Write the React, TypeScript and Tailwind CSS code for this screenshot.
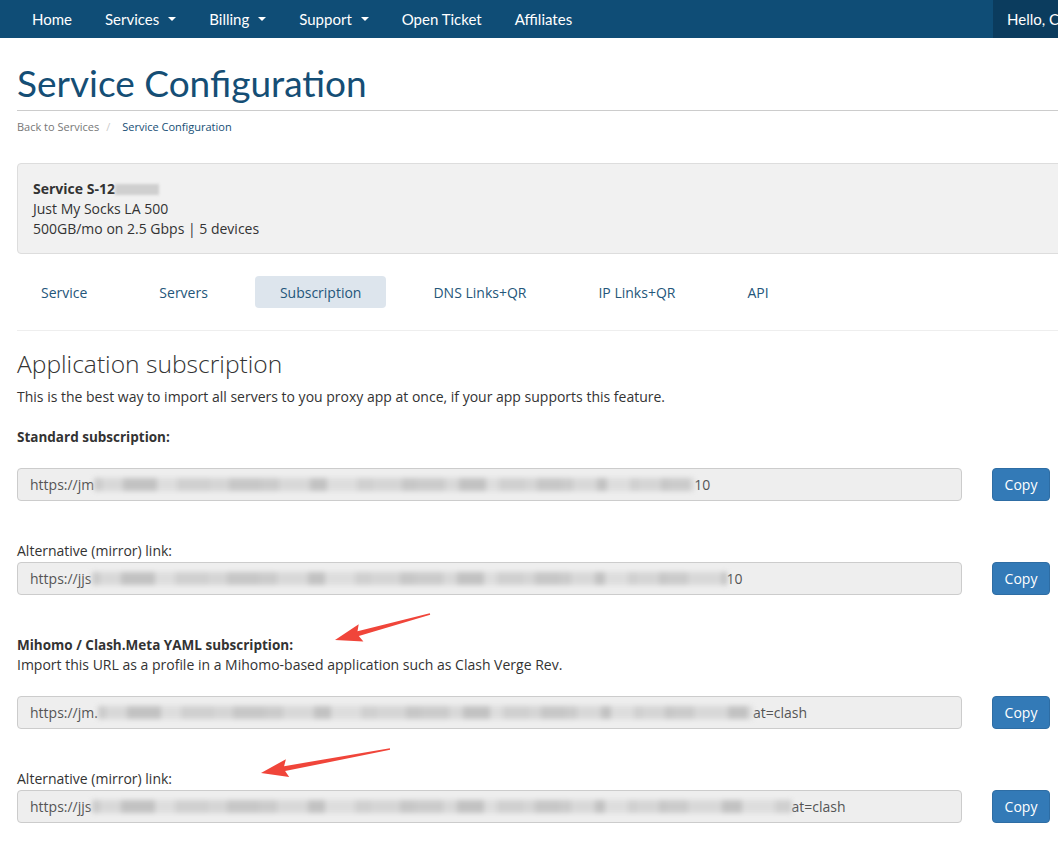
import React from 'react';

const navItems = [
  { label: 'Home', caret: false },
  { label: 'Services', caret: true },
  { label: 'Billing', caret: true },
  { label: 'Support', caret: true },
  { label: 'Open Ticket', caret: false },
  { label: 'Affiliates', caret: false },
];

const tabs = ['Service', 'Servers', 'Subscription', 'DNS Links+QR', 'IP Links+QR', 'API'];

// grey smudge used where the URL was blurred out
const Smudge: React.FC<{ width: number }> = ({ width }) => {
  const blocks = [];
  let x = 0;
  let i = 0;
  const shades = ['#cbcbcb', '#d8d8d8', '#c2c2c2', '#dddddd', '#d0d0d0', '#d5d5d5', '#c7c7c7'];
  while (x < width) {
    const w = Math.min(8 + ((i * 13) % 27), width - x);
    blocks.push(
      <span
        key={i}
        className="inline-block h-[13px]"
        style={{ width: w, background: shades[i % shades.length] }}
      />
    );
    x += w;
    i++;
  }
  return <span className="inline-flex items-center blur-[2.5px]">{blocks}</span>;
};

interface LinkRowProps {
  prefix: string;
  blur: number;
  suffix: string;
}

const LinkRow: React.FC<LinkRowProps> = ({ prefix, blur, suffix }) => (
  <div className="flex items-center gap-[30px]">
    <div className="w-[945px] h-[33px] flex items-center px-[12px] bg-[#eeeeee] border border-[#cccccc] rounded-[4px] text-[14px] text-[#555555] overflow-hidden whitespace-nowrap">
      <span>{prefix}</span>
      <Smudge width={blur} />
      <span>{suffix}</span>
    </div>
    <button className="w-[58px] h-[33px] bg-[#337ab7] border border-[#2e6da4] rounded-[4px] text-white text-[14px]">
      Copy
    </button>
  </div>
);

const Arrow: React.FC<{ tail: [number, number]; tip: [number, number] }> = ({ tail, tip }) => {
  const dx = tip[0] - tail[0];
  const dy = tip[1] - tail[1];
  const len = Math.hypot(dx, dy);
  const ux = dx / len;
  const uy = dy / len;
  const nx = -uy;
  const ny = ux;
  const head = 24;
  const bx = tip[0] - ux * head;
  const by = tip[1] - uy * head;
  const p = (x: number, y: number) => `${x.toFixed(1)},${y.toFixed(1)}`;
  const pts = [
    p(tail[0] + nx * 0.8, tail[1] + ny * 0.8),
    p(bx + nx * 2.5, by + ny * 2.5),
    p(bx + nx * 9 - ux * 3, by + ny * 9 - uy * 3),
    p(tip[0], tip[1]),
    p(bx - nx * 9 - ux * 3, by - ny * 9 - uy * 3),
    p(bx - nx * 2.5, by - ny * 2.5),
    p(tail[0] - nx * 0.8, tail[1] - ny * 0.8),
  ].join(' ');
  return <polygon points={pts} fill="#f0453a" />;
};

export default function App() {
  return (
    <div className="relative w-full min-h-[859px] overflow-hidden bg-white font-['Open_Sans',sans-serif] text-[#333333]">
      {/* top nav */}
      <div className="h-[38px] bg-[#0f4d76] flex items-stretch font-['Lato',sans-serif] text-white text-[15px]">
        <div className="flex items-center gap-[33px] pl-[32px]">
          {navItems.map((n) => (
            <span key={n.label} className="flex items-center gap-[9px]">
              {n.label}
              {n.caret && (
                <span className="inline-block w-0 h-0 border-l-[4px] border-r-[4px] border-t-[4px] border-l-transparent border-r-transparent border-t-white" />
              )}
            </span>
          ))}
        </div>
        <div className="ml-auto w-[65px] bg-[#0b3c5e] flex items-center pl-[14px] whitespace-nowrap">
          Hello, C
        </div>
      </div>

      <div className="w-[1100px] pl-[17px]">
        <h1 className="mt-[25px] pb-[7px] border-b border-[#cccccc] font-['Lato',sans-serif] text-[37px] leading-[40px] text-[#154e75]">
          Service Configuration
        </h1>
        <div className="mt-[7px] text-[11px] leading-[18px]">
          <span className="text-[#777777]">Back to Services</span>
          <span className="text-[#cccccc] ml-[7px] mr-[12px]">/</span>
          <span className="text-[#154e75]">Service Configuration</span>
        </div>

        <div className="mt-[27px] h-[91px] bg-[#f1f1f1] border border-[#dddddd] rounded-[4px] pl-[15px] pt-[15px] text-[14px] leading-[20px]">
          <div className="font-bold flex items-center">
            Service S-12
            <span className="inline-block w-[44px] h-[11px] bg-[#cfcfcf] blur-[1.5px]" />
          </div>
          <div>Just My Socks LA 500</div>
          <div>500GB/mo on 2.5 Gbps | 5 devices</div>
        </div>

        <div className="mt-[22px] flex gap-[22px] -ml-[1px]">
          {tabs.map((t) => (
            <div
              key={t}
              className={`h-[32px] px-[25px] flex items-center text-[14px] text-[#24567a] rounded-[4px] ${
                t === 'Subscription' ? 'bg-[#dde5ed]' : ''
              }`}
            >
              {t}
            </div>
          ))}
        </div>

        <div className="mt-[22px] border-t border-[#eeeeee]" />

        <h2 className="mt-[20px] text-[24.6px] leading-[26px] font-light text-[#333333]">
          Application subscription
        </h2>
        <p className="mt-[10px] text-[14px] leading-[20px]">
          This is the best way to import all servers to you proxy app at once, if your app supports this feature.
        </p>

        <div className="mt-[20px] text-[13.5px] leading-[20px] font-bold">Standard subscription:</div>
        <div className="mt-[21px]">
          <LinkRow prefix="https://jm" blur={600} suffix="10" />
        </div>

        <div className="mt-[40px] text-[14px] leading-[20px]">Alternative (mirror) link:</div>
        <div className="mt-[1px]">
          <LinkRow prefix="https://jjs" blur={635} suffix="10" />
        </div>

        <div className="mt-[40px] text-[13.5px] leading-[20px] font-bold">Mihomo / Clash.Meta YAML subscription:</div>
        <div className="text-[14px] leading-[20px]">
          Import this URL as a profile in a Mihomo-based application such as Clash Verge Rev.
        </div>
        <div className="mt-[21px]">
          <LinkRow prefix="https://jm." blur={655} suffix="at=clash" />
        </div>

        <div className="mt-[40px] text-[14px] leading-[20px]">Alternative (mirror) link:</div>
        <div className="mt-[1px]">
          <LinkRow prefix="https://jjs" blur={700} suffix="at=clash" />
        </div>
      </div>

      {/* annotation arrows drawn over the page */}
      <svg className="absolute left-0 top-0 pointer-events-none" width="1058" height="859">
        <Arrow tail={[430, 614]} tip={[335, 640]} />
        <Arrow tail={[390, 749]} tip={[261, 773]} />
      </svg>
    </div>
  );
}
